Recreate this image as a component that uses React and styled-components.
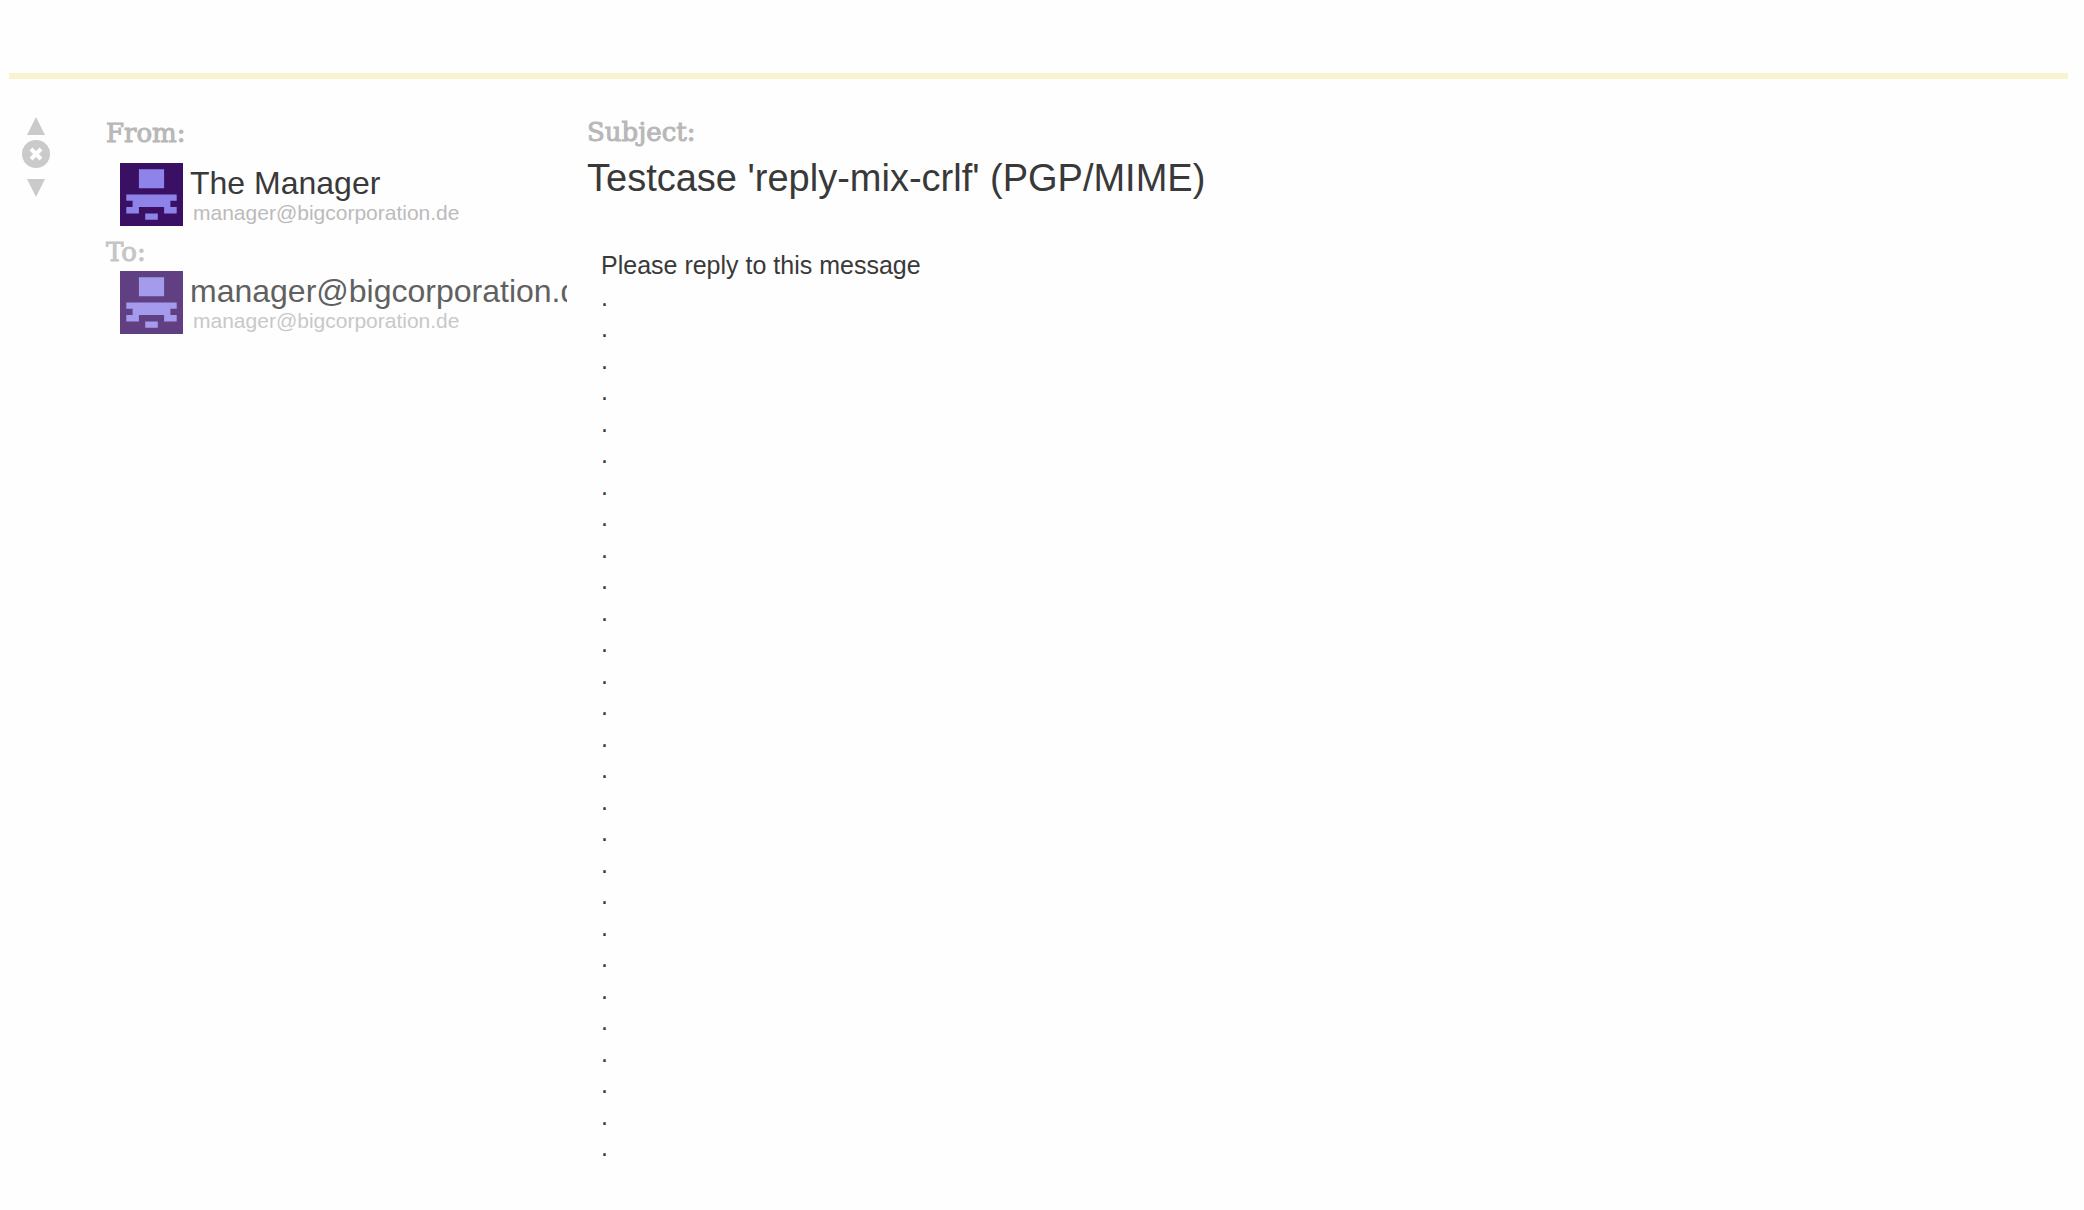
import React from "react";
import styled, { createGlobalStyle } from "styled-components";

const GlobalStyle = createGlobalStyle`
  *, *::before, *::after { box-sizing: border-box; }
  body {
    margin: 0;
    background: #fefefe;
    color: #393939;
    font-family: "Liberation Sans", Arial, sans-serif;
  }
`;

const Page = styled.main`
  padding: 73px 16px 0 9px;
`;

const Message = styled.article`
  display: flex;
  align-items: flex-start;
  border-top: 6px solid #f9f4d0;
`;

const Controls = styled.nav`
  display: flex;
  flex: none;
  flex-direction: column;
  align-items: center;
  width: 54px;
  margin-right: 43px;
  padding-top: 30px;
`;

const ControlButton = styled.button`
  display: block;
  width: 30px;
  height: 30px;
  padding: 0;
  border: 0;
  background: none;
  color: #cacaca;
  cursor: pointer;

  svg { display: block; }
`;

const People = styled.aside`
  flex: 0 1 461px;
  min-width: 0;
  margin-right: 20px;
  padding-top: 36px;
`;

const PersonGroup = styled.section`
  opacity: ${(p) => (p.$faded ? 0.8 : 1)};
`;

const Label = styled.h2`
  margin: 0;
  color: #b8b8b8;
  font-family: "DejaVu Serif", serif;
  font-size: 26px;
  font-weight: 400;
  line-height: 36px;
  -webkit-text-stroke: 1px currentColor;
`;

const Person = styled.div`
  display: flex;
  gap: 7px;
  padding: ${(p) => (p.$tight ? "1px" : "12px")} 0 8px 14px;
`;

const Avatar = styled.svg`
  display: block;
  flex: none;
  width: 63px;
  height: 63px;
`;

const PersonText = styled.div`
  flex: 1;
  min-width: 0;
  overflow: hidden;
  white-space: nowrap;
`;

const Name = styled.div`
  font-size: 32px;
  line-height: 40px;
`;

const Email = styled.a`
  display: block;
  padding-left: 3px;
  color: #bbb;
  font-size: 21px;
  line-height: 20px;
  text-decoration: none;
`;

const Content = styled.div`
  flex: 1;
  min-width: 0;
  padding-top: 35px;
`;

const Subject = styled.h1`
  margin: 0;
  font-size: 38px;
  font-weight: 400;
  line-height: 56px;
`;

const Body = styled.div`
  padding: 44px 14px 0;
  font-size: 25px;
  line-height: 1.26;
  white-space: pre-line;
`;

function Identicon() {
  return (
    <Avatar viewBox="0 0 10 10" aria-hidden="true">
      <rect width="10" height="10" fill="#3a1065" />
      <path
        fill="#8e83e8"
        d="M3 1h4v3H3z M1 5h8v1H8v1h1v1H7V7H3v1H1V7h1V6H1z M4 8h2v1H4z"
      />
    </Avatar>
  );
}

function PersonRow({ name, email, tight }) {
  return (
    <Person $tight={tight}>
      <Identicon />
      <PersonText>
        <Name>{name}</Name>
        <Email href={`mailto:${email}`}>{email}</Email>
      </PersonText>
    </Person>
  );
}

const text = ["Please reply to this message", ...Array(28).fill(".")].join("\n");

export default function App() {
  return (
    <>
      <GlobalStyle />
      <Page>
        <Message>
          <Controls aria-label="Message navigation">
            <ControlButton type="button" aria-label="Previous message">
              <svg width="30" height="30" viewBox="0 0 30 30">
                <path d="M15 8l9 18H6z" fill="currentColor" />
              </svg>
            </ControlButton>
            <ControlButton type="button" aria-label="Close message">
              <svg width="30" height="30" viewBox="0 0 30 30">
                <circle cx="15" cy="15" r="14" fill="currentColor" />
                <path d="M10 10l10 10M20 10L10 20" stroke="#fefefe" strokeWidth="4" />
              </svg>
            </ControlButton>
            <ControlButton type="button" aria-label="Next message">
              <svg width="30" height="30" viewBox="0 0 30 30">
                <path d="M6 10h18l-9 18z" fill="currentColor" />
              </svg>
            </ControlButton>
          </Controls>
          <People>
            <PersonGroup>
              <Label>From:</Label>
              <PersonRow name="The Manager" email="manager@bigcorporation.de" />
            </PersonGroup>
            <PersonGroup $faded>
              <Label>To:</Label>
              <PersonRow
                tight
                name="manager@bigcorporation.de"
                email="manager@bigcorporation.de"
              />
            </PersonGroup>
          </People>
          <Content>
            <Label as="div">Subject:</Label>
            <Subject>Testcase 'reply-mix-crlf' (PGP/MIME)</Subject>
            <Body>{text}</Body>
          </Content>
        </Message>
      </Page>
    </>
  );
}
